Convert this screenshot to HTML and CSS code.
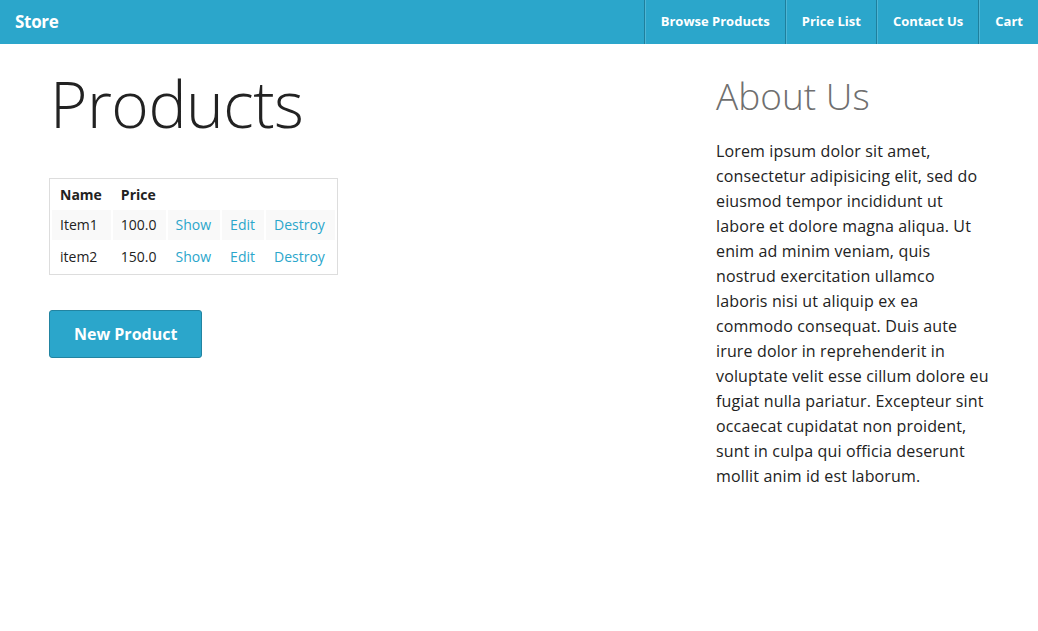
FILE: index.html
```html
<!DOCTYPE html>
<html lang="en">
<head>
<meta charset="utf-8">
<title>Store</title>
<link rel="stylesheet" href="styles.css">
</head>
<body>
<nav class="top-bar">
  <a class="brand" href="#">Store</a>
  <ul class="nav-links">
    <li><a href="#">Browse Products</a></li>
    <li><a href="#">Price List</a></li>
    <li><a href="#">Contact Us</a></li>
    <li><a href="#">Cart</a></li>
  </ul>
</nav>
<div class="page">
  <main class="main">
    <h1 class="title">Products</h1>
    <table class="products">
      <thead>
        <tr><th>Name</th><th>Price</th><th></th><th></th><th></th></tr>
      </thead>
      <tbody>
        <tr class="odd"><td>Item1</td><td>100.0</td><td><a href="#">Show</a></td><td><a href="#">Edit</a></td><td><a href="#">Destroy</a></td></tr>
        <tr><td>item2</td><td>150.0</td><td><a href="#">Show</a></td><td><a href="#">Edit</a></td><td><a href="#">Destroy</a></td></tr>
      </tbody>
    </table>
    <a class="button" href="#">New Product</a>
  </main>
  <aside class="sidebar">
    <h2 class="side-title">About Us</h2>
    <p class="side-text">Lorem ipsum dolor sit amet, consectetur adipisicing elit, sed do eiusmod tempor incididunt ut labore et dolore magna aliqua. Ut enim ad minim veniam, quis nostrud exercitation ullamco laboris nisi ut aliquip ex ea commodo consequat. Duis aute irure dolor in reprehenderit in voluptate velit esse cillum dolore eu fugiat nulla pariatur. Excepteur sint occaecat cupidatat non proident, sunt in culpa qui officia deserunt mollit anim id est laborum.</p>
  </aside>
</div>
</body>
</html>
```

FILE: styles.css
```css
* { box-sizing: border-box; }
body {
  margin: 0;
  font-family: "Open Sans", "Liberation Sans", sans-serif;
  color: #222;
  background: #fff;
}
a { text-decoration: none; }

.top-bar {
  display: flex;
  justify-content: space-between;
  align-items: stretch;
  height: 44px;
  background: #2ba6cb;
}
.brand {
  display: flex;
  align-items: center;
  padding: 0 15px 2px;
  color: #fff;
  font-weight: 700;
  font-size: 17px;
  letter-spacing: -0.3px;
}
.nav-links {
  display: flex;
  margin: 0;
  padding: 0;
  list-style: none;
}
.nav-links li {
  display: flex;
  border-left: 1px solid #1f7f9c;
  box-shadow: inset 1px 0 0 #4fb6d5;
}
.nav-links a {
  display: flex;
  align-items: center;
  padding: 0 15px 2px 16px;
  color: #fff;
  font-weight: 700;
  font-size: 13px;
}

.page {
  display: flex;
}
.main {
  width: 716px;
  padding-left: 50px;
}
.title {
  margin: 22px 0 0;
  font-size: 64px;
  font-weight: 300;
  line-height: 76px;
  letter-spacing: -0.5px;
  color: #222;
}
.products {
  margin-top: 36px;
  margin-left: -1px;
  border: 1px solid #ddd;
  border-spacing: 2px;
  font-size: 14px;
}
.products th,
.products td {
  padding: 6px 9px 6px 8px;
  line-height: 18px;
  text-align: left;
}
.products td:last-child { padding-right: 10px; }
.products th {
  font-weight: 700;
  padding-top: 5px;
  padding-bottom: 4px;
}
.products .odd td { background: #f9f9f9; }
.products a { color: #2ba6cb; }

.button {
  display: inline-block;
  margin-top: 35px;
  margin-left: -1px;
  padding: 13px 24px;
  background: #2ba6cb;
  border: 1px solid #2284a1;
  border-radius: 3px;
  color: #fff;
  font-weight: 700;
  font-size: 16px;
  line-height: 20px;
}

.sidebar {
  width: 273px;
}
.side-title {
  margin: 28px 0 0;
  font-size: 37px;
  font-weight: 300;
  line-height: 48px;
  color: #6f6f6f;
}
.side-text {
  margin: 19px 0 0;
  font-size: 16px;
  line-height: 25px;
  letter-spacing: 0.15px;
  color: #222;
}
```
